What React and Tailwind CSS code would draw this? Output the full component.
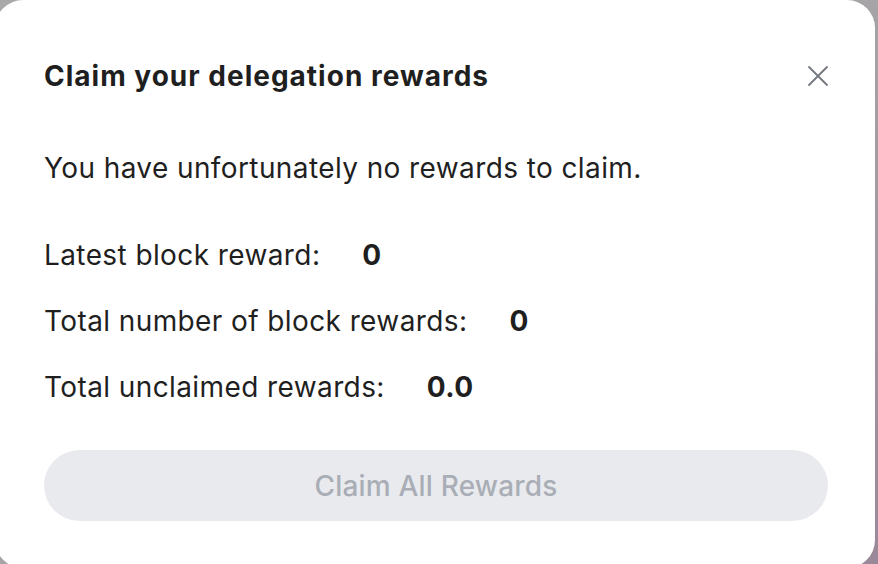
export default function App() {
  return (
    <div
      className="w-[878px] h-[564px] overflow-hidden bg-gradient-to-br from-[#a9a9a9] via-[#a6a4a6] to-[#9a8898]"
      style={{ fontFamily: "Inter, 'Noto Sans', sans-serif" }}
    >
      <div className="-ml-[5px] w-[880px] h-[568px] bg-white rounded-[28px] pl-[49px] pr-[47px] pt-[60px] text-[#1f1f1f]">
        <div className="flex items-center justify-between h-[32px]">
          <h2 className="text-[28px] font-bold leading-[32px] tracking-[1px]">Claim your delegation rewards</h2>
          <button className="w-[28px] h-[28px] -mr-[4px] flex items-center justify-center text-[#737880]">
            <svg width="22" height="22" viewBox="0 0 22 22" fill="none" stroke="currentColor" strokeWidth="1.8" strokeLinecap="round">
              <path d="M2 2L20 20M20 2L2 20" />
            </svg>
          </button>
        </div>
        <p className="mt-[59px] text-[28px] leading-[34px] tracking-[0.4px]">You have unfortunately no rewards to claim.</p>
        <div className="mt-[53px] flex flex-col gap-[32px] text-[28px] leading-[34px] tracking-[0.4px]">
          <div className="flex items-center gap-[42px]">
            <span>Latest block reward:</span>
            <span className="font-bold">0</span>
          </div>
          <div className="flex items-center gap-[42px]">
            <span>Total number of block rewards:</span>
            <span className="font-bold">0</span>
          </div>
          <div className="flex items-center gap-[42px]">
            <span>Total unclaimed rewards:</span>
            <span className="font-bold">0.0</span>
          </div>
        </div>
        <button className="mt-[46px] w-full h-[71px] rounded-full bg-[#e9eaee] text-[#a9aeb6] text-[28px] font-medium tracking-[0.2px]">
          Claim All Rewards
        </button>
      </div>
    </div>
  );
}
